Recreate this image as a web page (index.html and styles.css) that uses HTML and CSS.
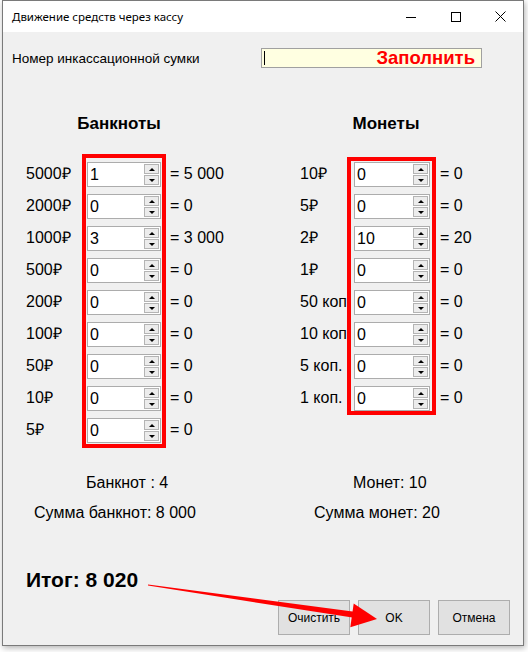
FILE: index.html
```html
<!DOCTYPE html>
<html lang="ru">
<head>
<meta charset="utf-8">
<title>Движение средств через кассу</title>
<link rel="stylesheet" href="styles.css">
</head>
<body>
<div class="window">
  <div class="titlebar">
    <div class="title">Движение средств через кассу</div>
    <div class="ctrl"><svg width="10" height="10" viewBox="0 0 10 10"><path d="M0 5.5H10" stroke="#000" stroke-width="1"/></svg></div>
    <div class="ctrl"><svg width="10" height="10" viewBox="0 0 10 10"><rect x="0.5" y="0.5" width="9" height="9" fill="none" stroke="#000" stroke-width="1"/></svg></div>
    <div class="ctrl"><svg width="11" height="11" viewBox="0 0 11 11"><path d="M0.5 0.5L10.5 10.5M10.5 0.5L0.5 10.5" stroke="#000" stroke-width="1"/></svg></div>
  </div>

  <div class="client">
    <div class="bag-row">
      <span class="bag-label">Номер инкассационной сумки</span>
      <div class="bag-input"><span class="caret"></span><span class="fill">Заполнить</span></div>
    </div>

    <div class="sections">
      <div class="section notes">
        <div class="heading">Банкноты</div>
        <div class="grid">
          <div class="labels">
            <div>5000₽</div><div>2000₽</div><div>1000₽</div><div>500₽</div><div>200₽</div><div>100₽</div><div>50₽</div><div>10₽</div><div>5₽</div>
          </div>
          <div class="box">
            <div class="spin"><span class="val">1</span><span class="btns"><span class="b"><i class="up"></i></span><span class="b"><i class="dn"></i></span></span></div>
            <div class="spin"><span class="val">0</span><span class="btns"><span class="b"><i class="up"></i></span><span class="b"><i class="dn"></i></span></span></div>
            <div class="spin"><span class="val">3</span><span class="btns"><span class="b"><i class="up"></i></span><span class="b"><i class="dn"></i></span></span></div>
            <div class="spin"><span class="val">0</span><span class="btns"><span class="b"><i class="up"></i></span><span class="b"><i class="dn"></i></span></span></div>
            <div class="spin"><span class="val">0</span><span class="btns"><span class="b"><i class="up"></i></span><span class="b"><i class="dn"></i></span></span></div>
            <div class="spin"><span class="val">0</span><span class="btns"><span class="b"><i class="up"></i></span><span class="b"><i class="dn"></i></span></span></div>
            <div class="spin"><span class="val">0</span><span class="btns"><span class="b"><i class="up"></i></span><span class="b"><i class="dn"></i></span></span></div>
            <div class="spin"><span class="val">0</span><span class="btns"><span class="b"><i class="up"></i></span><span class="b"><i class="dn"></i></span></span></div>
            <div class="spin"><span class="val">0</span><span class="btns"><span class="b"><i class="up"></i></span><span class="b"><i class="dn"></i></span></span></div>
          </div>
          <div class="results">
            <div>= 5 000</div><div>= 0</div><div>= 3 000</div><div>= 0</div><div>= 0</div><div>= 0</div><div>= 0</div><div>= 0</div><div>= 0</div>
          </div>
        </div>
      </div>

      <div class="section coins">
        <div class="heading">Монеты</div>
        <div class="grid">
          <div class="labels">
            <div>10₽</div><div>5₽</div><div>2₽</div><div>1₽</div><div>50 коп.</div><div>10 коп.</div><div>5 коп.</div><div>1 коп.</div>
          </div>
          <div class="box">
            <div class="spin"><span class="val">0</span><span class="btns"><span class="b"><i class="up"></i></span><span class="b"><i class="dn"></i></span></span></div>
            <div class="spin"><span class="val">0</span><span class="btns"><span class="b"><i class="up"></i></span><span class="b"><i class="dn"></i></span></span></div>
            <div class="spin"><span class="val">10</span><span class="btns"><span class="b"><i class="up"></i></span><span class="b"><i class="dn"></i></span></span></div>
            <div class="spin"><span class="val">0</span><span class="btns"><span class="b"><i class="up"></i></span><span class="b"><i class="dn"></i></span></span></div>
            <div class="spin"><span class="val">0</span><span class="btns"><span class="b"><i class="up"></i></span><span class="b"><i class="dn"></i></span></span></div>
            <div class="spin"><span class="val">0</span><span class="btns"><span class="b"><i class="up"></i></span><span class="b"><i class="dn"></i></span></span></div>
            <div class="spin"><span class="val">0</span><span class="btns"><span class="b"><i class="up"></i></span><span class="b"><i class="dn"></i></span></span></div>
            <div class="spin"><span class="val">0</span><span class="btns"><span class="b"><i class="up"></i></span><span class="b"><i class="dn"></i></span></span></div>
          </div>
          <div class="results">
            <div>= 0</div><div>= 0</div><div>= 20</div><div>= 0</div><div>= 0</div><div>= 0</div><div>= 0</div><div>= 0</div>
          </div>
        </div>
      </div>
    </div>

    <div class="summary">
      <div class="sum-col">
        <div class="sum-line notes-count">Банкнот : 4</div>
        <div class="sum-line notes-total">Сумма банкнот: 8 000</div>
      </div>
      <div class="sum-col">
        <div class="sum-line coins-count">Монет: 10</div>
        <div class="sum-line coins-total">Сумма монет: 20</div>
      </div>
    </div>

    <div class="total">Итог: 8 020</div>

    <div class="buttons">
      <div class="btn">Очистить</div>
      <div class="btn">OK</div>
      <div class="btn">Отмена</div>
    </div>
  </div>
</div>

<svg class="arrow" width="528" height="652" viewBox="0 0 528 652">
  <polygon points="148,584.6 356.4,612 355.6,618 148,585.6" fill="#ff0000"/>
  <polygon points="377,619 353.7,603.5 350.3,627.3" fill="#ff0000"/>
</svg>
</body>
</html>
```

FILE: styles.css
```css
* { box-sizing: border-box; }

html, body { margin: 0; padding: 0; }

body {
  width: 528px;
  height: 652px;
  position: relative;
  overflow: hidden;
  background: #ffffff;
  font-family: "Liberation Sans", Arial, sans-serif;
  color: #000;
}

.window {
  margin-left: 2px;
  width: 522px;
  height: 646px;
  border: 1px solid #7a7a7a;
  background: #f0f0f0;
  box-shadow: 1px 2px 6px rgba(0, 0, 0, 0.3);
  display: flex;
  flex-direction: column;
}

.titlebar {
  flex: none;
  height: 31px;
  background: #ffffff;
  display: flex;
  align-items: center;
}

.title {
  flex: 1;
  padding-left: 9px;
  font-family: "Noto Sans", "Liberation Sans", sans-serif;
  font-size: 11.5px;
  color: #000;
}

.ctrl {
  width: 45px;
  height: 31px;
  display: flex;
  align-items: center;
  justify-content: center;
}

.ctrl svg { display: block; }

.client {
  flex: 1;
  display: flex;
  flex-direction: column;
}

/* bag number row */
.bag-row {
  margin-top: 16px;
  height: 20px;
  padding: 0 41px 0 9px;
  display: flex;
  align-items: center;
  justify-content: space-between;
}

.bag-label {
  font-size: 13.5px;
}

.bag-input {
  width: 221px;
  height: 20px;
  background: #ffffe1;
  border: 1px solid #a0a0a0;
  display: flex;
  align-items: center;
  padding: 0 6px 0 2px;
}

.caret {
  width: 1px;
  height: 14px;
  background: #000;
}

.fill {
  margin-left: auto;
  color: #ff0000;
  font-weight: bold;
  font-size: 18.5px;
  line-height: 18px;
}

/* sections */
.sections {
  margin-top: 46px;
  display: flex;
  gap: 35px;
  align-items: flex-start;
}

.section { width: 232px; }

.heading {
  text-align: center;
  font-weight: bold;
  font-size: 17px;
  line-height: 20px;
}

.grid {
  margin-top: 20px;
  display: flex;
  align-items: flex-start;
  font-size: 16px;
}

.labels, .results {
  padding-top: 4px;
  white-space: nowrap;
}

.labels div, .results div {
  height: 32px;
  line-height: 32px;
}

.notes .grid { padding-left: 23px; }
.notes .labels { width: 56px; }
.coins .grid { padding-left: 30px; }
.coins .labels { width: 47px; }

.results { margin-left: 4px; }

.box {
  border: 4px solid #ff0000;
  display: flex;
  flex-direction: column;
  gap: 7px;
}

.notes .box { padding: 4px 1px 1px 1px; }
.notes .spin { width: 74px; }

.coins .box { margin-top: 3px; padding: 1px 2px 0 3px; }
.coins .spin { width: 76px; }

.spin {
  height: 25px;
  background: #ffffff;
  border: 1px solid #acacac;
  display: flex;
}

.val {
  flex: 1;
  padding-left: 2px;
  line-height: 23px;
  font-size: 16px;
}

.btns {
  width: 16px;
  padding: 1px 1px 1px 0;
  display: flex;
  flex-direction: column;
  gap: 1px;
}

.b {
  flex: 1;
  background: #ececec;
  border: 1px solid #b4b4b4;
  display: flex;
  align-items: center;
  justify-content: center;
}

.up, .dn {
  width: 0;
  height: 0;
  border-left: 3px solid transparent;
  border-right: 3px solid transparent;
}

.up { border-bottom: 3px solid #000; }
.dn { border-top: 3px solid #000; }

/* summary */
.summary {
  margin-top: 20px;
  display: flex;
  gap: 35px;
  font-size: 16px;
}

.sum-col { width: 232px; }

.sum-line {
  line-height: 30px;
  white-space: nowrap;
}

.notes-count { padding-left: 83px; }
.notes-total { padding-left: 31px; }
.coins-count { padding-left: 83px; }
.coins-total { padding-left: 44px; }

.total {
  margin-top: 40px;
  padding-left: 23px;
  font-weight: bold;
  font-size: 21px;
  line-height: 24px;
}

.buttons {
  margin-top: 8px;
  padding-right: 13px;
  display: flex;
  justify-content: flex-end;
  gap: 8px;
}

.btn {
  width: 72px;
  height: 35px;
  background: #e1e1e1;
  border: 1px solid #adadad;
  display: flex;
  align-items: center;
  justify-content: center;
  font-size: 12px;
}

.arrow {
  position: absolute;
  left: 0;
  top: 0;
  pointer-events: none;
}
```
